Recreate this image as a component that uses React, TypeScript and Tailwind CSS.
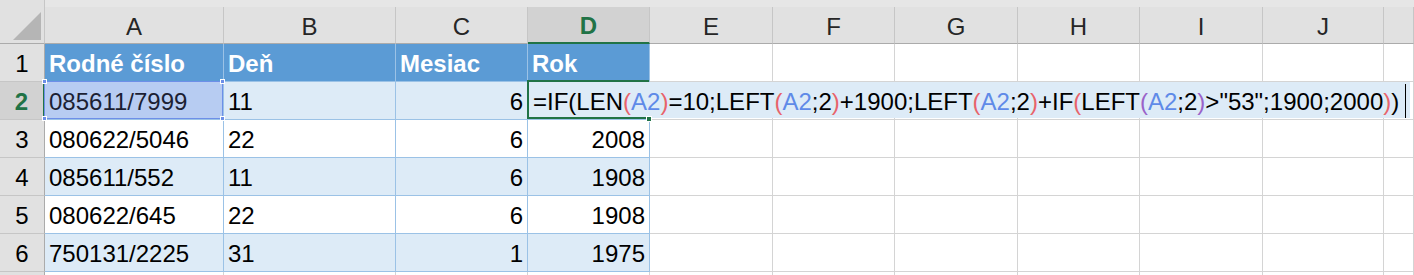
import React from "react";

const BLACK = "text-black";
const RED = "text-[#e8636b]";
const BLUE = "text-[#5f8ae8]";
const PURPLE = "text-[#9a62c9]";

const formula: [string, string][] = [
  ["=IF(", BLACK],
  ["LEN", BLACK],
  ["(", RED],
  ["A2", BLUE],
  [")", RED],
  ["=10;LEFT", BLACK],
  ["(", RED],
  ["A2", BLUE],
  [";2", BLACK],
  [")", RED],
  ["+1900;LEFT", BLACK],
  ["(", RED],
  ["A2", BLUE],
  [";2", BLACK],
  [")", RED],
  ["+IF", BLACK],
  ["(", RED],
  ["LEFT", BLACK],
  ["(", PURPLE],
  ["A2", BLUE],
  [";2", BLACK],
  [")", PURPLE],
  ['>"53";1900;2000', BLACK],
  [")", RED],
  [")", BLACK],
];

const colLetters = ["A", "B", "C", "D", "E", "F", "G", "H", "I", "J", ""];

const data: string[][] = [
  ["085611/7999", "11", "6", ""],
  ["080622/5046", "22", "6", "2008"],
  ["085611/552", "11", "6", "1908"],
  ["080622/645", "22", "6", "1908"],
  ["750131/2225", "31", "1", "1975"],
];

function Handle({ pos }: { pos: string }) {
  return <div className={"absolute w-[5px] h-[5px] bg-[#6d8fe8] border border-white " + pos} />;
}

function RefHighlight() {
  return (
    <div className="absolute -left-px -top-px right-0 bottom-0 border border-[#6d8fe8]">
      <Handle pos="-left-[3px] -top-[3px]" />
      <Handle pos="-right-[3px] -top-[3px]" />
      <Handle pos="-left-[3px] -bottom-[3px]" />
      <Handle pos="-right-[3px] -bottom-[3px]" />
    </div>
  );
}

function CellEditor() {
  return (
    <>
      <div className="absolute left-px top-0 w-[881px] h-[36px] bg-[#ddebf7] flex items-end pb-[4px] pl-[4px] whitespace-pre z-10">
        {formula.map(([t, c], i) => (
          <span key={i} className={c}>
            {t}
          </span>
        ))}
        <div className="absolute right-[4px] top-[2px] w-px h-[34px] bg-black" />
      </div>
      <div className="absolute -left-px -top-[2px] right-0 bottom-0 border-2 border-r-0 border-[#217346] z-20" />
      <div className="absolute -right-[3px] -bottom-[3px] w-[6px] h-[6px] bg-[#217346] border border-white z-20" />
    </>
  );
}

export default function App() {
  const cells: React.ReactNode[] = [];

  cells.push(
    <div
      key="corner"
      className="row-span-2 bg-[#e1e1e1] border-r border-b border-r-[#c6c6c6] border-b-[#ababab] flex items-end justify-end pr-[3px] pb-[3px]"
    >
      <svg width="28" height="28" viewBox="0 0 28 28">
        <polygon points="0,28 28,28 28,0" fill="#b5b5b5" />
      </svg>
    </div>
  );
  cells.push(<div key="strip" className="col-span-11 bg-[#e6e6e6]" />);

  colLetters.forEach((l, i) => {
    const sel = l === "D";
    cells.push(
      <div
        key={"h" + i}
        className={
          sel
            ? "flex items-end justify-center pb-[4px] bg-[#d2d2d2] border-r border-r-[#c6c6c6] border-b-2 border-b-[#217346] text-[#217346] font-bold"
            : "flex items-end justify-center pb-[4px] bg-[#e1e1e1] border-r border-b border-r-[#c6c6c6] border-b-[#ababab] text-[#262626]"
        }
      >
        {l}
      </div>
    );
  });

  const rowHeader = (n: number, sel: boolean, label = true) => (
    <div
      key={"rh" + n}
      className={
        sel
          ? "flex items-end justify-center pb-[5px] bg-[#d2d2d2] border-r-2 border-b border-r-[#217346] border-b-[#c6c6c6] text-[#217346] font-bold"
          : "flex items-end justify-center pb-[5px] bg-[#e1e1e1] border-r border-b border-r-[#ababab] border-b-[#c6c6c6] text-black"
      }
    >
      {label ? n : null}
    </div>
  );

  cells.push(rowHeader(1, false));
  ["Rodné číslo", "Deň", "Mesiac", "Rok"].forEach((t, i) => {
    cells.push(
      <div
        key={"th" + i}
        className="flex items-end pb-[5px] pl-[4px] bg-[#5b9bd5] border-r border-b border-[#9bc2e6] text-white font-bold whitespace-nowrap"
      >
        {t}
      </div>
    );
  });
  for (let c = 4; c < 11; c++) {
    cells.push(<div key={"r1c" + c} className="bg-white border-r border-b border-[#d4d4d4]" />);
  }

  data.forEach((row, ri) => {
    const n = ri + 2;
    const band = n % 2 === 0;
    cells.push(rowHeader(n, n === 2));
    row.forEach((t, ci) => {
      const right = ci >= 2;
      const hl = n === 2 && ci === 0;
      const active = n === 2 && ci === 3;
      const bg = hl ? "bg-[#b7ccf2]" : band ? "bg-[#ddebf7]" : "bg-white";
      cells.push(
        <div
          key={"r" + n + "c" + ci}
          className={
            "flex items-end pb-[5px] border-r border-b border-[#9bc2e6] whitespace-nowrap " +
            bg +
            (right ? " justify-end pr-[4px]" : " pl-[4px]") +
            (hl ? " text-[#1c1f33] relative" : " text-black") +
            (active ? " relative" : "")
          }
        >
          {t}
          {hl && <RefHighlight />}
          {active && <CellEditor />}
        </div>
      );
    });
    for (let c = 4; c < 11; c++) {
      cells.push(<div key={"r" + n + "e" + c} className="bg-white border-r border-b border-[#d4d4d4]" />);
    }
  });

  cells.push(rowHeader(7, false, false));
  for (let c = 0; c < 11; c++) {
    cells.push(<div key={"r7c" + c} className="bg-white border-r border-b border-[#d4d4d4]" />);
  }

  return (
    <div className="w-[1414px] h-[275px] overflow-hidden bg-white font-['Liberation_Sans',Arial,sans-serif] text-[24px] leading-[24px]">
      <div className="grid grid-cols-[45px_179px_172px_132px_122px_123px_122px_123px_122px_123px_121px_1fr] grid-rows-[7px_37px_38px_38px_38px_38px_38px_38px_38px]">
        {cells}
      </div>
    </div>
  );
}
